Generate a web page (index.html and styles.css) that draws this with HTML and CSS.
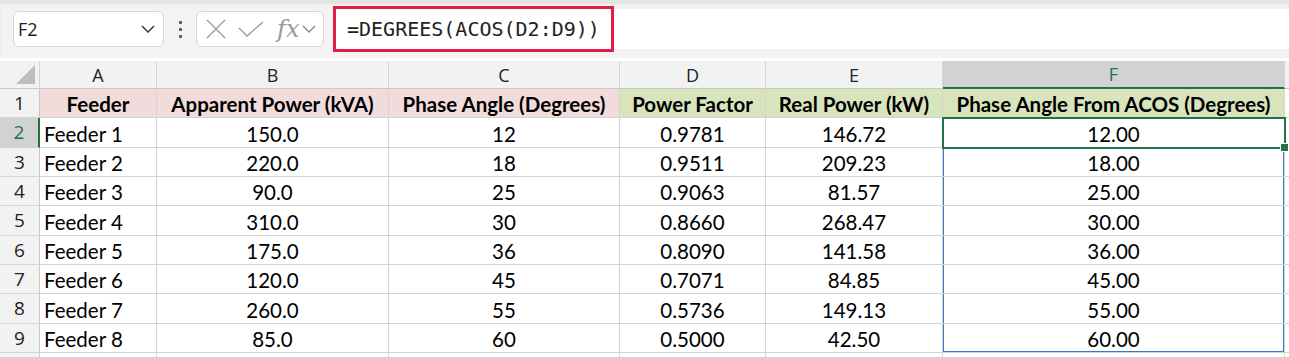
FILE: index.html
```html
<!DOCTYPE html>
<html>
    <head>
        <meta charset="utf-8">
        <title>Phase Angle From ACOS</title>
        <link rel="stylesheet" href="styles.css">
    </head>
    <body>
      <div class="toolbar">
        <div class="namebox">
          <span>F2</span>
          <svg class="chev" width="14" height="8" viewBox="0 0 14 8"><path d="M1 1 L7 7 L13 1" fill="none" stroke="#444" stroke-width="1.6"/></svg>
        </div>
        <div class="dots"><i></i><i></i><i></i></div>
        <div class="fxbox">
          <svg width="20" height="20" viewBox="0 0 20 20"><path d="M1 1 L19 19 M19 1 L1 19" stroke="#a0a0a0" stroke-width="1.5" fill="none"/></svg>
          <svg width="26" height="16" viewBox="0 0 26 16"><path d="M1 7 L9 15 L25 1" stroke="#a0a0a0" stroke-width="1.5" fill="none"/></svg>
          <span class="fx">fx</span>
          <svg width="14" height="8" viewBox="0 0 14 8"><path d="M1 1 L7 7 L13 1" fill="none" stroke="#8a8a8a" stroke-width="1.4"/></svg>
        </div>
        <div class="formula">
          <span class="mark">=DEGREES(ACOS(D2:D9))</span>
        </div>
      </div>

      <div class="sheet">
        <div class="hd corner"><i></i></div>
        <div class="hd">A</div>
        <div class="hd">B</div>
        <div class="hd">C</div>
        <div class="hd">D</div>
        <div class="hd">E</div>
        <div class="hd sel">F</div>
        <div class="hd tail"></div>

        <div class="rh">1</div>
        <div class="c pink b">Feeder</div>
        <div class="c pink b">Apparent Power (kVA)</div>
        <div class="c pink b">Phase Angle (Degrees)</div>
        <div class="c green b">Power Factor</div>
        <div class="c green b">Real Power (kW)</div>
        <div class="c green b">Phase Angle From ACOS (Degrees)</div>
        <div class="c tail"></div>

        <div class="rh sel">2</div>
        <div class="c l">Feeder 1</div>
        <div class="c">150.0</div>
        <div class="c">12</div>
        <div class="c">0.9781</div>
        <div class="c">146.72</div>
        <div class="c active">12.00<i class="handle"></i></div>
        <div class="c tail"></div>

        <div class="rh">3</div>
        <div class="c l">Feeder 2</div>
        <div class="c">220.0</div>
        <div class="c">18</div>
        <div class="c">0.9511</div>
        <div class="c">209.23</div>
        <div class="c rng">18.00</div>
        <div class="c tail"></div>

        <div class="rh">4</div>
        <div class="c l">Feeder 3</div>
        <div class="c">90.0</div>
        <div class="c">25</div>
        <div class="c">0.9063</div>
        <div class="c">81.57</div>
        <div class="c rng">25.00</div>
        <div class="c tail"></div>

        <div class="rh">5</div>
        <div class="c l">Feeder 4</div>
        <div class="c">310.0</div>
        <div class="c">30</div>
        <div class="c">0.8660</div>
        <div class="c">268.47</div>
        <div class="c rng">30.00</div>
        <div class="c tail"></div>

        <div class="rh">6</div>
        <div class="c l">Feeder 5</div>
        <div class="c">175.0</div>
        <div class="c">36</div>
        <div class="c">0.8090</div>
        <div class="c">141.58</div>
        <div class="c rng">36.00</div>
        <div class="c tail"></div>

        <div class="rh">7</div>
        <div class="c l">Feeder 6</div>
        <div class="c">120.0</div>
        <div class="c">45</div>
        <div class="c">0.7071</div>
        <div class="c">84.85</div>
        <div class="c rng">45.00</div>
        <div class="c tail"></div>

        <div class="rh">8</div>
        <div class="c l">Feeder 7</div>
        <div class="c">260.0</div>
        <div class="c">55</div>
        <div class="c">0.5736</div>
        <div class="c">149.13</div>
        <div class="c rng">55.00</div>
        <div class="c tail"></div>

        <div class="rh">9</div>
        <div class="c l">Feeder 8</div>
        <div class="c">85.0</div>
        <div class="c">60</div>
        <div class="c">0.5000</div>
        <div class="c">42.50</div>
        <div class="c rng last">60.00</div>
        <div class="c tail"></div>

        <div class="rh"></div>
        <div class="c"></div>
        <div class="c"></div>
        <div class="c"></div>
        <div class="c"></div>
        <div class="c"></div>
        <div class="c"></div>
        <div class="c tail"></div>
      </div>
    </body>
</html>
```

FILE: styles.css
```css
  body {
      margin: 0;
      width: 1289px;
      height: 358px;
      overflow: hidden;
      background-color: white;
      font-family: 'Lato', 'Open Sans', sans-serif;
  }

  /* formula bar */
  .toolbar {
      height: 58px;
      box-sizing: border-box;
      display: flex;
      align-items: center;
      background-color: rgb(243, 243, 243);
      border-top: 3px solid rgb(228, 228, 228);
      box-shadow: inset 0 1px 2px rgba(0, 0, 0, 0.08);
      padding-left: 13px;
      padding-bottom: 3px;
      margin-bottom: 3px;
  }

  .namebox {
      width: 151px;
      height: 36px;
      box-sizing: border-box;
      background-color: white;
      border: 1px solid rgb(214, 214, 214);
      border-radius: 6px;
      display: flex;
      align-items: center;
      justify-content: space-between;
      padding: 0 8px 0 4px;
      font-family: 'Open Sans', 'Noto Sans', sans-serif;
      font-size: 18px;
      color: #222;
  }

  .dots {
      width: 32px;
      display: flex;
      flex-direction: column;
      align-items: center;
      gap: 4px;
  }
  .dots i {
      width: 3px;
      height: 3px;
      border-radius: 1px;
      background-color: #555;
  }

  .fxbox {
      width: 128px;
      height: 36px;
      box-sizing: border-box;
      background-color: white;
      border: 1px solid rgb(214, 214, 214);
      border-radius: 6px;
      display: flex;
      align-items: center;
      padding-left: 9px;
      gap: 12px;
  }
  .fxbox .fx {
      font-family: 'DejaVu Serif', 'Liberation Serif', serif;
      font-style: italic;
      font-size: 24px;
      color: #999;
      margin-left: 1px;
      margin-right: -9px;
      line-height: 22px;
  }

  .formula {
      flex: 1;
      height: 40px;
      margin-left: 9px;
      background-color: white;
      border-radius: 6px 0 0 6px;
      display: flex;
      align-items: center;
  }
  .mark {
      height: 46px;
      width: 281px;
      box-sizing: border-box;
      border: 3px solid rgb(224, 29, 72);
      display: flex;
      align-items: center;
      padding-left: 11px;
      font-family: 'DejaVu Sans Mono', monospace;
      font-size: 20px;
      color: #222;
  }

  /* grid */
  .sheet {
      display: grid;
      grid-template-columns: 40px 117px 232px 231px 146px 177px 342px 1fr;
      grid-template-rows: 28px repeat(9, 29.33px) 1fr;
      height: 297px;
      font-size: 20.5px;
  }

  .hd {
      background-color: rgb(242, 242, 242);
      border-right: 1px solid rgb(212, 212, 212);
      border-bottom: 1px solid rgb(200, 200, 200);
      display: flex;
      align-items: center;
      justify-content: center;
      font-family: 'Open Sans', 'Noto Sans', sans-serif;
      font-size: 18px;
      color: #222;
  }
  .hd.sel {
      background-color: rgb(210, 210, 210);
      color: rgb(33, 115, 70);
      border-bottom: 2px solid rgb(33, 115, 70);
  }
  .hd.tail { border-right: none; }

  .corner { position: relative; }
  .corner i {
      position: absolute;
      right: 4px;
      bottom: 4px;
      width: 0;
      height: 0;
      border-left: 19px solid transparent;
      border-bottom: 19px solid rgb(190, 190, 190);
  }

  .rh {
      background-color: rgb(242, 242, 242);
      border-right: 1px solid rgb(200, 200, 200);
      border-bottom: 1px solid rgb(212, 212, 212);
      display: flex;
      align-items: center;
      justify-content: center;
      font-family: 'Open Sans', 'Noto Sans', sans-serif;
      font-size: 19px;
      color: #222;
  }
  .rh.sel {
      background-color: rgb(210, 210, 210);
      color: rgb(33, 115, 70);
      border-right: 2px solid rgb(33, 115, 70);
  }

  .c {
      border-right: 1px solid rgb(212, 212, 212);
      border-bottom: 1px solid rgb(212, 212, 212);
      display: flex;
      align-items: flex-end;
      justify-content: center;
      padding-bottom: 1px;
      box-sizing: border-box;
      color: black;
      white-space: nowrap;
  }
  .c.l { justify-content: flex-start; padding-left: 4px; }
  .c.b { font-weight: bold; }
  .c.tail { border-right: none; }
  .pink { background-color: rgb(242, 220, 219); }
  .green { background-color: rgb(216, 228, 188); }

  .active {
      position: relative;
      outline: 2px solid rgb(33, 115, 70);
      outline-offset: -1px;
  }
  .handle {
      position: absolute;
      right: -5px;
      bottom: -5px;
      width: 7px;
      height: 7px;
      background-color: rgb(33, 115, 70);
      border: 1px solid white;
      z-index: 2;
  }

  .rng {
      box-shadow: inset 1px 0 0 rgb(68, 114, 196), inset -1px 0 0 rgb(68, 114, 196);
  }
  .rng.last {
      box-shadow: inset 1px 0 0 rgb(68, 114, 196), inset -1px 0 0 rgb(68, 114, 196), inset 0 -1px 0 rgb(68, 114, 196);
  }
```
